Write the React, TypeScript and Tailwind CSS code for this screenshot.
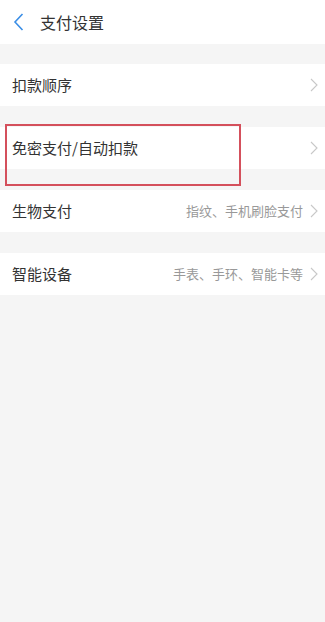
import React from 'react'

const font = { fontFamily: '"Noto Sans CJK SC", "Noto Sans", sans-serif' }

function Chevron() {
  return (
    <svg width="8" height="14" viewBox="0 0 8 14" className="ml-[7px] shrink-0">
      <path d="M1 1l6 6-6 6" fill="none" stroke="#c8c8c8" strokeWidth="1.1" />
    </svg>
  )
}

function Row({ label, hint }: { label: string; hint?: string }) {
  return (
    <div className="flex h-[42px] items-center bg-white pl-[12px] pr-[7px]">
      <span className="flex-1 text-[15px] text-[#333]">{label}</span>
      {hint && <span className="text-[13px] text-[#999]">{hint}</span>}
      <Chevron />
    </div>
  )
}

export default function App() {
  const rows = [
    { label: '扣款顺序' },
    { label: '免密支付/自动扣款', highlight: true },
    { label: '生物支付', hint: '指纹、手机刷脸支付' },
    { label: '智能设备', hint: '手表、手环、智能卡等' },
  ]

  return (
    <div className="min-h-[622px] w-[325px] bg-[#f5f5f5]" style={font}>
      {/* Header */}
      <div className="flex h-[44px] items-center bg-white pl-[13px]">
        <svg width="11" height="18" viewBox="0 0 11 18">
          <path d="M9.5 1L2 9l7.5 8" fill="none" stroke="#3a8ee6" strokeWidth="1.6" />
        </svg>
        <span className="ml-[16px] text-[16px] text-[#333]">支付设置</span>
      </div>

      <div className="flex flex-col gap-[21px] pt-[20px]">
        {rows.map((r) => (
          <div key={r.label} className="relative">
            <Row label={r.label} hint={r.hint} />
            {r.highlight && (
              <div className="absolute left-[5px] top-[-3px] h-[62px] w-[236px] border-2 border-[#d4505c]" />
            )}
          </div>
        ))}
      </div>
    </div>
  )
}
